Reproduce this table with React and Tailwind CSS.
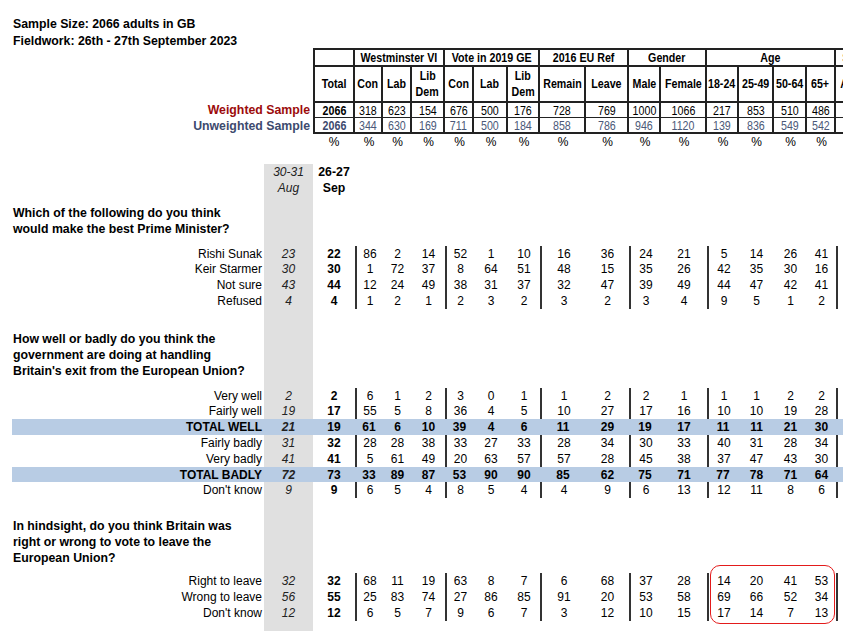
import React from "react";

const GRID =
  "grid grid-cols-[264px_49px_42px_28px_29px_33px_29px_34px_32px_46px_43px_32px_46px_32px_35px_33px_29px_40px_40px]";
const LINE = "border-[#222]";

const groups = [
  { title: "Westminster VI", span: "col-span-3" },
  { title: "Vote in 2019 GE", span: "col-span-3" },
  { title: "2016 EU Ref", span: "col-span-2" },
  { title: "Gender", span: "col-span-2" },
  { title: "Age", span: "col-span-4" },
  { title: "Social Grade", span: "col-span-2" },
];

// first = starts a new group (gets the separator bar on its left)
const columns = [
  { name: "Con", first: true },
  { name: "Lab" },
  { name: "Lib Dem" },
  { name: "Con", first: true },
  { name: "Lab" },
  { name: "Lib Dem" },
  { name: "Remain", first: true },
  { name: "Leave" },
  { name: "Male", first: true },
  { name: "Female" },
  { name: "18-24", first: true },
  { name: "25-49" },
  { name: "50-64" },
  { name: "65+" },
  { name: "ABC1", first: true },
  { name: "C2DE" },
];

const weighted = [318, 623, 154, 676, 500, 176, 728, 769, 1000, 1066, 217, 853, 510, 486, 1171, 895];
const unweighted = [344, 630, 169, 711, 500, 184, 858, 786, 946, 1120, 139, 836, 549, 542, 1236, 830];

const q1 = [
  ["Rishi Sunak", 23, 22, [86, 2, 14, 52, 1, 10, 16, 36, 24, 21, 5, 14, 26, 41, 23, 21]],
  ["Keir Starmer", 30, 30, [1, 72, 37, 8, 64, 51, 48, 15, 35, 26, 42, 35, 30, 16, 31, 28]],
  ["Not sure", 43, 44, [12, 24, 49, 38, 31, 37, 32, 47, 39, 49, 44, 47, 42, 41, 43, 46]],
  ["Refused", 4, 4, [1, 2, 1, 2, 3, 2, 3, 2, 3, 4, 9, 5, 1, 2, 3, 5]],
];

const q2 = [
  ["Very well", 2, 2, [6, 1, 2, 3, 0, 1, 1, 2, 2, 1, 1, 1, 2, 2, 2, 2]],
  ["Fairly well", 19, 17, [55, 5, 8, 36, 4, 5, 10, 27, 17, 16, 10, 10, 19, 28, 16, 18]],
  ["TOTAL WELL", 21, 19, [61, 6, 10, 39, 4, 6, 11, 29, 19, 17, 11, 11, 21, 30, 18, 20], true],
  ["Fairly badly", 31, 32, [28, 28, 38, 33, 27, 33, 28, 34, 30, 33, 40, 31, 28, 34, 33, 31]],
  ["Very badly", 41, 41, [5, 61, 49, 20, 63, 57, 57, 28, 45, 38, 37, 47, 43, 30, 42, 40]],
  ["TOTAL BADLY", 72, 73, [33, 89, 87, 53, 90, 90, 85, 62, 75, 71, 77, 78, 71, 64, 75, 71], true],
  ["Don't know", 9, 9, [6, 5, 4, 8, 5, 4, 4, 9, 6, 13, 12, 11, 8, 6, 7, 9]],
];

const q3 = [
  ["Right to leave", 32, 32, [68, 11, 19, 63, 8, 7, 6, 68, 37, 28, 14, 20, 41, 53, 28, 37]],
  ["Wrong to leave", 56, 55, [25, 83, 74, 27, 86, 85, 91, 20, 53, 58, 69, 66, 52, 34, 60, 50]],
  ["Don't know", 12, 12, [6, 5, 7, 9, 6, 7, 3, 12, 10, 15, 17, 14, 7, 13, 12, 13]],
];

const cell = "flex items-center justify-center";

// no narrow face installed, so squeeze Liberation Sans to look like Arial Narrow
const Narrow = ({ children }) => (
  <span className="inline-block scale-x-[0.82] whitespace-nowrap">{children}</span>
);

function AnswerRow({ row, height }) {
  const [label, prev, total, vals, band] = row;
  const bg = band ? "bg-[#b8cce4]" : "";
  return (
    <div className={`${GRID} ${height} leading-none`}>
      <div className={`flex items-center justify-end pr-[2px] ${band ? "ml-3 font-bold bg-[#b8cce4]" : ""}`}>
        {label}
      </div>
      <div className={`${cell} italic text-[#222] ${band ? "font-bold bg-[#b8cce4]" : "bg-[#e0e0e0]"}`}>{prev}</div>
      <div className={`${cell} font-bold ${bg}`}>{total}</div>
      {vals.map((v, i) => (
        <div
          key={i}
          className={`${cell} ${bg} ${band ? "font-bold" : ""} ${
            columns[i].first && !band ? "border-l-2 border-[#333]" : ""
          }`}
        >
          {v}
        </div>
      ))}
    </div>
  );
}

function QuestionRow({ lines, className }) {
  return (
    <div className={GRID}>
      <div className={`pl-[13px] font-bold text-[12.3px] leading-[16px] whitespace-nowrap ${className}`}>
        {lines.map((l) => (
          <div key={l}>{l}</div>
        ))}
      </div>
      <div className="bg-[#e0e0e0]" />
    </div>
  );
}

export default function App() {
  return (
    <div className="w-full h-[631px] overflow-hidden bg-white text-black text-[12px] font-['Liberation_Sans',Arial,sans-serif]">
      {/* title */}
      <div className="h-[48px] pt-[16px] pl-[13px] font-bold text-[12.3px] leading-[17px] whitespace-nowrap">
        <div>Sample Size: 2066 adults in GB</div>
        <div>Fieldwork: 26th - 27th September 2023</div>
      </div>

      {/* header table */}
      <div className={`${GRID} h-[19px] leading-none font-bold text-[13px]`}>
        <div className="col-span-2" />
        <div className={`border-2 ${LINE}`} />
        {groups.map((g) => (
          <div key={g.title} className={`${g.span} ${cell} border-t-2 border-r-2 border-b-2 ${LINE}`}>
            <Narrow>{g.title}</Narrow>
          </div>
        ))}
      </div>
      <div className={`${GRID} h-[36px] leading-[16px] font-bold text-[13px]`}>
        <div className="col-span-2" />
        <div className={`${cell} border-x-2 border-b-2 ${LINE}`}>
          <Narrow>Total</Narrow>
        </div>
        {columns.map((c, i) => (
          <div key={i} className={`${cell} flex-col text-center border-r-2 border-b-2 ${LINE}`}>
            {c.name === "Lib Dem" ? (
              <>
                <Narrow>Lib</Narrow>
                <Narrow>Dem</Narrow>
              </>
            ) : (
              <Narrow>{c.name}</Narrow>
            )}
          </div>
        ))}
      </div>
      <div className={`${GRID} h-[15px] leading-none`}>
        <div className="col-span-2 flex items-center justify-end pr-[3px] font-bold text-[12.3px] text-[#9c0b0b]">
          Weighted Sample
        </div>
        <div className={`${cell} text-[13px] font-bold border-x-2 border-b ${LINE}`}>
          <Narrow>2066</Narrow>
        </div>
        {weighted.map((v, i) => (
          <div key={i} className={`${cell} text-[13px] border-r-2 border-b ${LINE}`}>
            <Narrow>{v}</Narrow>
          </div>
        ))}
      </div>
      <div className={`${GRID} h-[16px] leading-none`}>
        <div className="col-span-2 flex items-center justify-end pr-[3px] font-bold text-[12.3px] text-[#3d4a6e]">
          Unweighted Sample
        </div>
        <div className={`${cell} text-[13px] font-bold text-[#3d4a6e] border-x-2 border-b-2 ${LINE}`}>
          <Narrow>2066</Narrow>
        </div>
        {unweighted.map((v, i) => (
          <div key={i} className={`${cell} text-[13px] text-[#4b5878] border-r-2 border-b-2 ${LINE}`}>
            <Narrow>{v}</Narrow>
          </div>
        ))}
      </div>
      <div className={`${GRID} h-[15px] leading-none`}>
        <div className="col-span-2" />
        <div className={cell}>%</div>
        {columns.map((c, i) => (
          <div key={i} className={cell}>
            %
          </div>
        ))}
      </div>
      <div className="h-[15px]" />

      {/* wave dates */}
      <div className={`${GRID} h-[32px] leading-[16px]`}>
        <div />
        <div className="bg-[#e0e0e0] text-center italic text-[#222]">
          <div>30-31</div>
          <div>Aug</div>
        </div>
        <div className="text-center font-bold text-[12.3px]">
          <div>26-27</div>
          <div>Sep</div>
        </div>
      </div>

      <QuestionRow
        className="pt-[9px] pb-[9px]"
        lines={["Which of the following do you think", "would make the best Prime Minister?"]}
      />
      {q1.map((r) => (
        <AnswerRow key={r[0]} row={r} height="h-[15.67px]" />
      ))}

      <QuestionRow
        className="pt-[22px] pb-[9px]"
        lines={["How well or badly do you think the", "government are doing at handling", "Britain's exit from the European Union?"]}
      />
      {q2.map((r) => (
        <AnswerRow key={r[0]} row={r} height="h-[15.8px]" />
      ))}

      <QuestionRow
        className="pt-[20px] pb-[7px]"
        lines={["In hindsight, do you think Britain was", "right or wrong to vote to leave the", "European Union?"]}
      />
      <div className="relative">
        {q3.map((r) => (
          <AnswerRow key={r[0] + "3"} row={r} height="h-[16px]" />
        ))}
        <div className="absolute left-[710px] -top-2 w-[125px] h-[59px] rounded-[10px] border border-[#e31b1b]" />
      </div>
      <div className={`${GRID} h-[40px]`}>
        <div />
        <div className="bg-[#e0e0e0]" />
      </div>
    </div>
  );
}
